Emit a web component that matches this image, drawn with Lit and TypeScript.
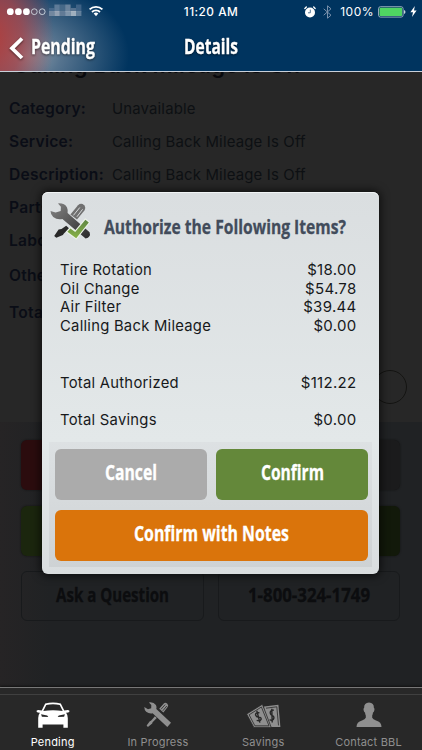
import { LitElement, html, svg, css } from "lit";
import { customElement, property } from "lit/decorators.js";

/** Condensed headline text, fitted to a given width. */
@customElement("fit-text")
class FitText extends LitElement {
  @property() text = "";
  @property({ type: Number }) width = 100;
  @property({ type: Number }) size = 20;
  static styles = css`
    :host { display: block; line-height: 0; }
    svg { display: block; overflow: visible; }
    text { font-family: "Open Sans", "Noto Sans", sans-serif; font-weight: 700; fill: currentColor; stroke: currentColor; stroke-width: 0.3px; }
  `;
  render() {
    return html`<svg width=${this.width} height="20">
      <text x="0" y="17" font-size=${this.size} textLength=${this.width} lengthAdjust="spacingAndGlyphs">${this.text}</text>
    </svg>`;
  }
}

@customElement("status-bar")
class StatusBar extends LitElement {
  static styles = css`
    :host { display: grid; grid-template-columns: 1fr auto 1fr; height: 23px; align-items: center; color: #fff; font: 500 11.8px "Inter", sans-serif; letter-spacing: 0.5px; }
    svg { display: block; }
    .right { display: flex; justify-content: flex-end; align-items: center; padding-right: 5px; }
    .alarm { margin-right: 7px; }
    .bt { margin-right: 8px; }
    .pct { font-weight: 400; font-size: 12px; margin-right: 4px; letter-spacing: 0.5px; }
    .batt { margin-right: 4px; }
  `;
  render() {
    const tiles = [
      ["#4f6f92", "#7d8fa6"], ["#7189a4", "#a3adbc"], ["#53728f", "#6b819b"],
      ["#8496ab", "#8ea0b4"], ["#687f99", "#b4bfcb"], ["#4c6c8f", "#6c87a1"],
    ];
    return html`
      <svg width="110" height="23" viewBox="0 0 110 23">
        ${[10.3, 18.4, 26.4].map((x) => svg`<circle cx=${x} cy="11.7" r="3.4" fill="#fff"/>`)}
        ${[34.3, 42.2].map((x) => svg`<circle cx=${x} cy="11.7" r="2.9" fill="none" stroke="#dce4ec" stroke-width=".8"/>`)}
        ${tiles.map((t, i) => svg`
          <rect x=${49 + i * 5.4} y=${i === 0 || i === 4 ? 8 : 4.5} width="5.4" height=${i === 0 || i === 4 ? 4 : 7.5} fill=${t[0]} opacity=".75"/>
          <rect x=${49 + i * 5.4} y="11" width="5.4" height="5" fill=${t[1]} opacity=".85"/>`)}
        <g fill="none" stroke="#fff" stroke-width="1.8">
          <path d="M89.6 9.4a9.2 9.2 0 0 1 12.8 0M92 12a5.7 5.7 0 0 1 8 0"/>
        </g>
        <path d="M93.7 13.6a3.4 3.4 0 0 1 4.6 0L96 16.2z" fill="#fff"/>
      </svg>
      <span>11:20 AM</span>
      <div class="right">
        <svg class="alarm" width="12" height="12" viewBox="0 0 12 12">
          <circle cx="6" cy="6.5" r="5" fill="#fff"/>
          <path d="M.9 2.4 2.3 1.1M11.1 2.4 9.7 1.1" stroke="#fff" stroke-width="1.4" stroke-linecap="round"/>
          <path d="M6.3 3.6v3.2H4" fill="none" stroke="#44698a" stroke-width=".9"/>
        </svg>
        <svg class="bt" width="9" height="14" viewBox="0 0 9 14">
          <path d="M.7 3.8 8 10.2 4.5 13.2V.8L8 3.8.7 10.2" fill="none" stroke="#7890ab" stroke-width="1"/>
        </svg>
        <span class="pct">100%</span>
        <svg class="batt" width="28" height="12" viewBox="0 0 28 12">
          <rect x=".5" y=".7" width="24.6" height="10.4" rx="2" fill="none" stroke="#b6c5d1" stroke-width=".8"/>
          <rect x="1.5" y="1.7" width="22.6" height="8.4" rx="1" fill="#4fd562"/>
          <path d="M26 4v4q1.5-.5 1.5-2T26 4" fill="#c7d2dc"/>
        </svg>
        <svg width="7" height="11" viewBox="0 0 7 11"><path d="M4.8 0 .4 6.2H3L2 11 6.6 4.5H4z" fill="#fff"/></svg>
      </div>`;
  }
}

@customElement("tab-bar")
class TabBar extends LitElement {
  static styles = css`
    :host { display: block; box-sizing: border-box; height: 63px; border-top: 1px solid #777; background: #282828; padding-top: 6px; box-shadow: 0 -1px 2px #111; }
    nav { display: grid; grid-template-columns: repeat(4, 105.3px); border-top: 1px solid #404040; height: 55px; }
    .tab { display: flex; flex-direction: column; align-items: center; color: #8f8f8f; font: 400 11px/14px "Inter", sans-serif; letter-spacing: 0.2px; padding-top: 6px; }
    .on { color: #fff; }
    svg { display: block; margin-bottom: 4px; }
  `;
  render() {
    return html`<nav>
      <div class="tab on">
        <svg width="34" height="30" viewBox="0 0 34 30" fill="#fff">
          <path fill-rule="evenodd" d="M9.2 2.4Q17 .8 24.8 2.4L28.3 9.6 31.8 9q2 0 1.7 1.6-.6 1.2-3.4 1.2Q31.8 14 31.8 17V26.8H27.4V23.5H6.6V26.8H2.2V17Q2.2 14 3.9 11.8 1.1 11.8.5 10.6.2 9 2.2 9L5.7 9.6zM10.3 4 7.3 10Q17 8.6 26.7 10L23.7 4Q17 2.6 10.3 4zM5.1 13.3 5.9 15.7 12.3 16 11.2 14.4zM28.9 13.3 28.1 15.7 21.7 16 22.8 14.4z"/>
        </svg>Pending
      </div>
      <div class="tab">
        <svg width="30" height="30" viewBox="0 0 30 30">
          <path d="M20.4 11.5 16.2 7.7 20.8 2.4Q22.4 1.1 24.3 2.7 26 4.4 24.6 6z" fill="#8f8f8f"/>
          <path d="M18 8.3 22.2 3.6M19.8 9.8 23.8 5" stroke="#282828" stroke-width=".8"/>
          <path d="M11.9 15.2 13.8 17 9.6 21.3 9.2 22.6 4.9 26 3.6 24.6 6.8 20.3 8 19.8z" fill="#8f8f8f"/>
          <path d="M5.9 1.5Q10.5.7 12.9 4 14 5.8 13.3 8L28 21.8 24.3 26 9.6 12.3Q6.2 13 3.2 10.8 1.3 8.9 1.3 6L5 8.2 8.2 7.2 8.3 3.9z" fill="#8f8f8f"/>
        </svg>In Progress
      </div>
      <div class="tab">
        <svg width="35" height="30" viewBox="0 0 35 30">
          <path d="M18 5.6 32.4 3.8 34.4 26H20z" fill="#8f8f8f"/>
          <path d="M20 7.2 30.8 5.8 32.5 24.4" fill="none" stroke="#282828" stroke-width=".8"/>
          <path d="M27.9 9.2Q24 8.9 24.2 12 24.5 14.1 26.3 14.6 29 15.7 27.2 18.6 25.8 20 23.6 18.7M25.8 7.7 26.2 21.5" fill="none" stroke="#282828" stroke-width="1.4"/>
          <path d="M.6 13 16.4 3.2 25.2 26.4H7.8z" fill="#8f8f8f" stroke="#282828" stroke-width=".8"/>
          <path d="M3.1 13.8 15.4 6 23 24.8H8.9z" fill="none" stroke="#282828" stroke-width=".8"/>
          <path d="M13.4 11.8Q9.2 11.2 9.6 14 10.5 16.4 12.5 16.1 15.6 16.2 15.1 18.4 14.2 20.4 10.7 19.3M10.8 9.8 13.9 21.6" fill="none" stroke="#282828" stroke-width="1.4"/>
        </svg>Savings
      </div>
      <div class="tab">
        <svg width="26" height="30" viewBox="0 0 26 30" fill="#8f8f8f">
          <path d="M13 1.6Q18 1.7 17.9 7 19 7.2 18.3 9.5 17.8 11.3 17 11.5 16.8 13.4 16.2 14.5V16.8Q17 18.6 20 19.5 25.5 21 25.5 25.9H.5Q.5 21 6 19.5 9 18.6 9.8 16.8V14.5Q9.2 13.4 9 11.5 8.2 11.3 7.7 9.5 7 7.2 8.1 7 8 1.7 13 1.6z"/>
        </svg>Contact BBL
      </div>
    </nav>`;
  }
}

@customElement("authorize-dialog")
class AuthorizeDialog extends LitElement {
  static styles = css`
    :host { display: block; box-sizing: border-box; width: 337px; height: 382px; border-radius: 6px; padding: 0 7px; background: linear-gradient(#dadee0, #e3e8e9 65%, #d9dddf); box-shadow: 0 0 8px 2px #0009, inset 0 1px #f1f4f5; }
    header { display: flex; height: 67px; color: #424c5b; }
    header svg { display: block; margin: 9px 11px 0 0; }
    header fit-text { margin-top: 24.5px; }
    .rows { padding: 2px 15.5px 0 11px; font: 400 14.8px/18.7px "Inter", sans-serif; letter-spacing: 0.26px; color: #17191b; height: 183px; box-sizing: border-box; }
    .row { display: flex; justify-content: space-between; }
    .amt { font-size: 15px; letter-spacing: 0.3px; }
    .total { margin-top: 38px; }
    .saving { margin-top: 18.3px; }
    .actions { display: grid; grid-template-columns: 152px 152px; gap: 9.5px; padding: 7px 5px 5px 5.5px; background: linear-gradient(#dde1e3, #ced2d4); height: 125px; box-sizing: border-box; }
    .btn { height: 51px; border-radius: 6px; display: flex; justify-content: center; padding-top: 14.3px; box-sizing: border-box; color: #fff; }
    .cancel { background: #ababab; }
    .confirm { background: #64883a; }
    .notes { background: #da740b; grid-column: span 2; padding-top: 14px; }
  `;
  rows = [["Tire Rotation", "$18.00"], ["Oil Change", "$54.78"], ["Air Filter", "$39.44"], ["Calling Back Mileage", "$0.00"]];
  row(r: string[], cls = "") {
    return html`<div class="row ${cls}"><span>${r[0]}</span><span class="amt">${r[1]}</span></div>`;
  }
  render() {
    return html`
      <header>
        <svg width="44" height="42" viewBox="0 0 44 42">
          <defs>
            <linearGradient id="w" x1="0" y1="0" x2="1" y2="1"><stop offset="0" stop-color="#858585"/><stop offset="1" stop-color="#292929"/></linearGradient>
            <linearGradient id="c" x1="0" y1="0" x2="0" y2="1"><stop offset="0" stop-color="#608743"/><stop offset="1" stop-color="#88b247"/></linearGradient>
          </defs>
          <path d="M28 18.5 21.4 13.6 29 4.3Q32 1.4 35.2 4.2 37.2 6.5 35.4 9.5z" fill="#707070"/>
          <path d="M24.4 14.4 30.8 6.5M27.9 15.8 33.6 8.3" stroke="#e0e3e4" stroke-width=".9"/>
          <path d="M17.2 24.8 20 27.3 14.7 32.7 13.9 34 7.3 36.8 5.2 35 9.6 28.5 12.5 27.9z" fill="#292929"/>
          <path d="M9 2.4Q15.6 2 18 6.5 19.2 9.3 18.6 12L40.6 31.2Q42.2 36.3 36.6 37.4L13.4 18Q8.3 19.2 4.2 16 1.6 13.5 1.5 9.9L6.6 11.6 11.7 9.9 11.9 5.8z" fill="url(#w)"/>
          <path d="M18.4 30.8 21.4 27.5 26.2 31 36.4 18.8 39.8 21.4 27.2 37.2z" fill="url(#c)" stroke="#edf3e9" stroke-width="2.2" paint-order="stroke"/>
        </svg>
        <fit-text text="Authorize the Following Items?" width="242" size="20"></fit-text>
      </header>
      <div class="rows">
        ${this.rows.map((r) => this.row(r))}
        ${this.row(["Total Authorized", "$112.22"], "total")}
        ${this.row(["Total Savings", "$0.00"], "saving")}
      </div>
      <div class="actions">
        <div class="btn cancel"><fit-text text="Cancel" width="52" size="21.4"></fit-text></div>
        <div class="btn confirm"><fit-text text="Confirm" width="63" size="21.4"></fit-text></div>
        <div class="btn notes"><fit-text text="Confirm with Notes" width="155" size="21.4"></fit-text></div>
      </div>`;
  }
}

@customElement("app-root")
class AppRoot extends LitElement {
  static styles = css`
    :host { display: flex; flex-direction: column; position: relative; width: 422px; height: 750px; overflow: hidden; background: #272727; font-family: "Inter", sans-serif; }
    .top { height: 72px; box-sizing: border-box; border-bottom: 1.5px solid #c9d0da; background: radial-gradient(ellipse 62px 95px at -8px 38px, #b03f3e 0%, #a3444acc 48%, #7d4e6000 100%), radial-gradient(ellipse 105px 75px at 24px 55px, #94a0ab 0%, #6c849bcc 35%, #00345f00 100%), #00345f; }
    .nav { display: grid; grid-template-columns: 1fr auto 1fr; align-items: start; color: #fff; padding-top: 14px; filter: drop-shadow(0 1px 1px #0008); }
    .back { display: flex; padding-left: 9px; gap: 7px; }
    .page { flex: 1; display: flex; flex-direction: column; min-height: 0; overflow: hidden; }
    h1 { font: 600 22px/24px "Inter", sans-serif; color: #08090d; margin: -19.5px 0 0 13px; letter-spacing: 0.2px; height: 39.5px; }
    dl { margin: 0; padding: 0 9px; height: 330px; display: grid; grid-template-columns: 103px 1fr; grid-template-rows: 33px 33px 33px 33px 35px 37px 37px; line-height: 33px; font-size: 15.6px; color: #0c0f17; }
    dt { font-weight: 600; color: #0a0d16; letter-spacing: 0.25px; white-space: nowrap; }
    dd { margin: 1px 0 0; color: #0d1013; font-size: 14.9px; letter-spacing: 0.18px; }
    .toggle { grid-column: 1 / -1; justify-self: end; width: 34px; height: 34px; box-sizing: border-box; margin: 37px 6px 0 0; border: 1.5px solid #141412; border-radius: 17px; }
    .panel { flex: 1; background: linear-gradient(90deg, #262425, #202224 12%); display: grid; grid-template-columns: 183px 182px; grid-auto-rows: 50px; align-content: start; gap: 15.5px 14px; padding: 18px 21px; }
    .pb { border-radius: 6px; box-shadow: 0 0 2px #111; display: flex; justify-content: center; padding-top: 12.6px; box-sizing: border-box; color: #0c0d0f; }
    .red { background: #2b0c0e; } .grey { background: #1b1b1c; } .green { background: #1b260e; } .dark { background: #12190a; }
    .line { border: 1px solid #181a1c; box-shadow: none; }
    .dialog { position: absolute; left: 42px; top: 192px; }
  `;
  render() {
    const v = "Calling Back Mileage Is Off";
    const rows = [["Category:", "Unavailable"], ["Service:", v], ["Description:", v], ["Parts:", ""], ["Labor:", ""], ["Other:", ""], ["Total:", ""]];
    return html`
      <div class="top">
        <status-bar></status-bar>
        <div class="nav">
          <div class="back">
            <svg width="15" height="24" viewBox="0 0 15 24"><path d="M13 1.5 3 11.3 13 21" fill="none" stroke="#fff" stroke-width="3.8"/></svg>
            <fit-text text="Pending" width="64" size="20.5"></fit-text>
          </div>
          <fit-text text="Details" width="54" size="20.5"></fit-text>
        </div>
      </div>
      <div class="page">
        <h1>${v}</h1>
        <dl>${rows.map((r) => html`<dt>${r[0]}</dt><dd>${r[1]}</dd>`)}<div class="toggle"></div></dl>
        <div class="panel">
          <div class="pb red"></div><div class="pb grey"></div>
          <div class="pb green"></div><div class="pb dark"></div>
          <div class="pb line"><fit-text text="Ask a Question" width="113" size="20"></fit-text></div>
          <div class="pb line"><fit-text text="1-800-324-1749" width="122" size="20"></fit-text></div>
        </div>
      </div>
      <tab-bar></tab-bar>
      <authorize-dialog class="dialog"></authorize-dialog>`;
  }
}
